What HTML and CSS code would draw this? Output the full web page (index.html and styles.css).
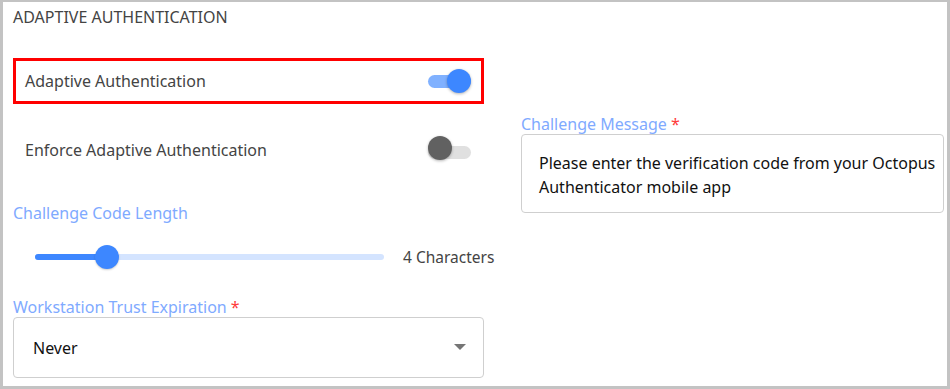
FILE: index.html
```html
<!DOCTYPE html>
<html lang="en">
<head>
    <meta charset="UTF-8">
    <meta name="viewport" content="width=device-width, initial-scale=1.0">
    <title>Adaptive Authentication</title>
    <link rel="stylesheet" href="styles.css">
</head>
<body>
    <div class="panel">
        <h2 class="panel-title">ADAPTIVE AUTHENTICATION</h2>

        <div class="columns">
            <!-- Left column: switches, slider, select -->
            <div class="col-left">
                <div class="switch-row highlighted">
                    <span>Adaptive Authentication</span>
                    <span class="switch on"><span class="thumb"></span></span>
                </div>

                <div class="switch-row">
                    <span>Enforce Adaptive Authentication</span>
                    <span class="switch"><span class="thumb"></span></span>
                </div>

                <label class="field-label code-label">Challenge Code Length</label>
                <div class="slider-row">
                    <div class="slider">
                        <div class="slider-fill" style="width: 72px;"></div>
                        <div class="slider-thumb" style="left: 72px;"></div>
                    </div>
                    <span class="slider-value">4 Characters</span>
                </div>

                <label class="field-label">Workstation Trust Expiration <span class="req">*</span></label>
                <div class="select-box">
                    <span>Never</span>
                    <span class="arrow"></span>
                </div>
            </div>

            <!-- Right column: challenge message -->
            <div class="col-right">
                <label class="field-label">Challenge Message <span class="req">*</span></label>
                <div class="text-box">
                    Please enter the verification code from your Octopus Authenticator mobile app
                </div>
            </div>
        </div>
    </div>
</body>
</html>
```

FILE: styles.css
```css
/* Global styles */
body {
    margin: 0;
    padding: 0;
    font-family: "Noto Sans", Arial, sans-serif;
    background-color: #fff;
    color: #333;
}

.panel {
    box-sizing: border-box;
    width: 950px;
    height: 389px;
    border-style: solid;
    border-color: #c3c3c3;
    border-width: 2px 3px 3px 3px;
    padding: 5px 3px 0 10px;
}

.panel-title {
    margin: 0;
    font-size: 16px;
    font-weight: normal;
    line-height: 20px;
    color: #444;
}

.columns {
    display: flex;
    gap: 37px;
    margin-top: 31px;
}

.col-left {
    flex-shrink: 0;
    width: 471px;
    display: flex;
    flex-direction: column;
}

.col-right {
    flex-shrink: 0;
    width: 423px;
    padding-top: 56px;
}

/* Switch rows */
.switch-row {
    box-sizing: border-box;
    height: 46px;
    display: flex;
    align-items: center;
    justify-content: space-between;
    padding: 0 10px 0 9px;
    font-size: 16px;
    color: #444;
    border: 3px solid transparent;
}

.switch-row.highlighted {
    border-color: #ff0000; /* Red highlight */
}

.switch-row + .switch-row {
    margin-top: 25px;
}

.switch-row + .switch-row span:first-child {
    margin-top: -4px;
}

.switch {
    position: relative;
    width: 43px;
    height: 13px;
    border-radius: 7px;
    background-color: #e0e0e0;
}

.switch .thumb {
    position: absolute;
    top: -6px;
    left: 0;
    width: 24px;
    height: 24px;
    border-radius: 50%;
    background-color: #616161;
    box-shadow: 0 1px 3px rgba(0, 0, 0, 0.3);
}

.switch.on {
    background-color: #80b1ff;
}

.switch.on .thumb {
    left: 19px;
    background-color: #3d87ff;
}

/* Labels */
.field-label {
    display: block;
    font-size: 16px;
    line-height: 20px;
    color: #7faaff;
}

.code-label {
    margin-top: 28px;
}

.req {
    color: #ff3b3b;
}

/* Slider */
.slider-row {
    display: flex;
    align-items: center;
    height: 30px;
    margin: 19px 0 25px 0;
    padding-left: 22px;
}

.slider {
    flex-shrink: 0;
    position: relative;
    width: 349px;
    height: 6px;
    border-radius: 3px;
    background-color: #d4e4ff;
}

.slider-fill {
    height: 6px;
    border-radius: 3px;
    background-color: #3d87ff;
}

.slider-thumb {
    position: absolute;
    top: -9px;
    width: 24px;
    height: 24px;
    margin-left: -12px;
    border-radius: 50%;
    background-color: #3d87ff;
    box-shadow: 0 1px 2px rgba(0, 0, 0, 0.2);
}

.slider-value {
    margin-left: 19px;
    white-space: nowrap;
    font-size: 15.5px;
    color: #444;
}

/* Select */
.select-box {
    box-sizing: border-box;
    height: 61px;
    border: 1px solid #cfcfcf;
    border-radius: 4px;
    display: flex;
    align-items: center;
    justify-content: space-between;
    padding: 0 17px 0 19px;
    font-size: 16px;
    color: #111;
}

.arrow {
    width: 0;
    height: 0;
    border-left: 6px solid transparent;
    border-right: 6px solid transparent;
    border-top: 6px solid #757575;
    margin-top: -2px;
}

/* Text area */
.text-box {
    box-sizing: border-box;
    height: 79px;
    border: 1px solid #cfcfcf;
    border-radius: 4px;
    padding: 16px 4px 0 17px;
    font-size: 16px;
    line-height: 24px;
    color: #111;
}
```
